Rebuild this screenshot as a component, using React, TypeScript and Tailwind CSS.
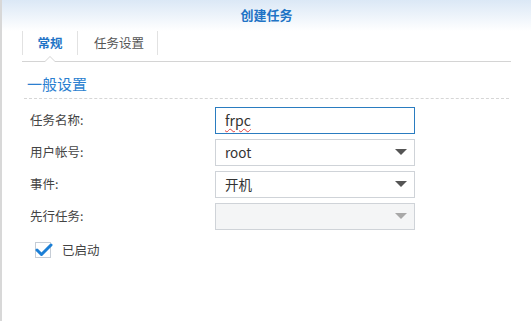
import React from "react";

const cjk = '"Noto Sans CJK SC", "Noto Sans", sans-serif';

const Caret = ({ disabled }: { disabled?: boolean }) => (
  <svg width="12" height="7" viewBox="0 0 12 7" className="shrink-0">
    <path d="M0 0 L12 0 L6 6 Z" fill={disabled ? "#a8a8a8" : "#555"} />
  </svg>
);

const Row = ({ label, children }: { label: string; children: React.ReactNode }) => (
  <div className="flex items-center h-[27px]">
    <div className="w-[191px] pl-[6px] text-[12.5px] text-[#444]">{label}</div>
    {children}
  </div>
);

const Select = ({ value, disabled }: { value?: string; disabled?: boolean }) => (
  <div
    className={`w-[200px] h-[27px] flex items-center justify-between pl-[9px] pr-[7px] border border-[#cfd3d8] ${
      disabled ? "bg-[#f4f5f6]" : "bg-white"
    }`}
  >
    <span className="text-[13.5px] text-[#333]">{value}</span>
    <Caret disabled={disabled} />
  </div>
);

export default function App() {
  return (
    <div
      className="w-[531px] h-[321px] bg-white border-l-2 border-[#d8d8d8] overflow-hidden"
      style={{ fontFamily: cjk }}
    >
      {/* header */}
      <div className="h-[31px] bg-gradient-to-b from-[#dbe8f6] to-white flex justify-center pt-[5px]">
        <span className="text-[13px] font-bold text-[#1f74c6]">创建任务</span>
      </div>

      {/* tabs */}
      <div className="mx-[20px] relative border-b border-[#d4d4d4]">
        <div className="flex h-[30px] pb-[6px]">
          <div className="w-[56px] flex items-center justify-center border-l border-r border-[#e2e2e2] text-[12.5px] font-bold text-[#1f74c6]">
            常规
          </div>
          <div className="w-[80px] flex items-center justify-center pl-[3px] border-r border-[#e2e2e2] text-[12.5px] text-[#555]">
            任务设置
          </div>
        </div>
        <div className="absolute left-[22px] bottom-[-1px] w-0 h-0 border-l-[6px] border-r-[6px] border-b-[6px] border-l-transparent border-r-transparent border-b-[#d4d4d4]" />
        <div className="absolute left-[23px] bottom-[-1px] w-0 h-0 border-l-[5px] border-r-[5px] border-b-[5px] border-l-transparent border-r-transparent border-b-white" />
      </div>

      {/* section */}
      <div className="mx-[22px] mt-[13px] border-b border-dashed border-[#d6d6d6] pb-[5px]">
        <div className="pl-[3px] text-[15px] leading-[18px] text-[#2b7fd0]">一般设置</div>
      </div>

      <div className="mx-[22px] mt-[8px] flex flex-col gap-[5px]">
        <Row label="任务名称:">
          <div className="w-[200px] h-[27px] flex items-center pl-[9px] border border-[#2a7cc0] bg-white">
            <span className="text-[14px] text-[#333] underline decoration-wavy decoration-[#e04040] decoration-1 underline-offset-2">
              frpc
            </span>
          </div>
        </Row>
        <Row label="用户帐号:">
          <Select value="root" />
        </Row>
        <Row label="事件:">
          <Select value="开机" />
        </Row>
        <Row label="先行任务:">
          <Select disabled />
        </Row>
      </div>

      <div className="mx-[22px] mt-[11px] pl-[11px] flex items-center gap-[11px]">
        <div className="w-[16px] h-[16px] border border-[#c6cdd6] bg-white relative">
          <svg width="18" height="14" viewBox="0 0 18 14" className="absolute left-[-1px] top-[0px]">
            <path d="M2 7 L6.5 11.5 L16 2" stroke="#1b7fd6" strokeWidth="3" fill="none" strokeLinecap="round" strokeLinejoin="round" />
          </svg>
        </div>
        <span className="text-[12.5px] text-[#444]">已启动</span>
      </div>
    </div>
  );
}
